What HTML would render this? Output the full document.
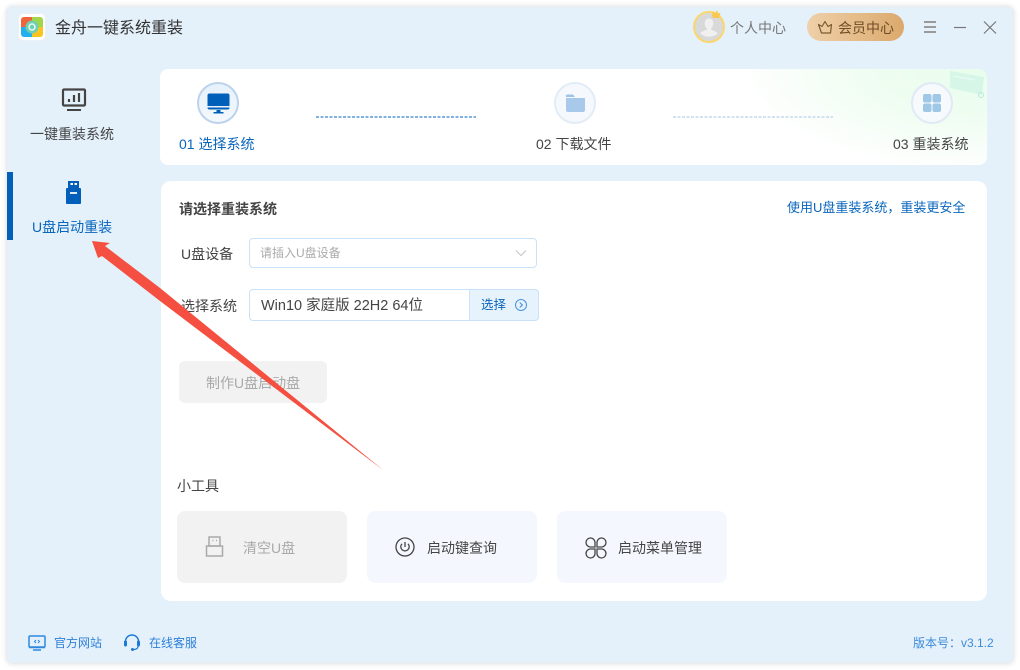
<!DOCTYPE html>
<html lang="zh-CN">
<head>
<meta charset="utf-8">
<title>金舟一键系统重装</title>
<style>
*{box-sizing:border-box;margin:0;padding:0}
html,body{width:1020px;height:670px;overflow:hidden;background:#fff}
body{font-family:"Liberation Sans","Noto Sans CJK SC",sans-serif;position:relative}
.a{position:absolute;white-space:nowrap;line-height:20px}
#win{position:absolute;left:7px;top:7px;width:1006px;height:656px;background:#e4f1fb;border-radius:4px;box-shadow:0 0 6px rgba(0,0,0,.18)}
.card{position:absolute;background:#fff}
.circle{position:absolute;width:42px;height:42px;border-radius:50%;top:82px}
svg{position:absolute;overflow:visible}
.tool{position:absolute;top:511px;width:170px;height:72px;border-radius:8px;background:#f4f8fe}
</style>
</head>
<body>
<div id="win"></div>

<!-- logo -->
<svg style="left:18px;top:13px" width="28" height="28" viewBox="0 0 28 28">
<rect x="0.5" y="0.5" width="27" height="27" rx="5" fill="#fff" stroke="#eef1f4"/>
<path d="M3 7a3 3 0 0 1 3-3h8v10H3z" fill="#f0643c"/>
<path d="M14 4h8a3 3 0 0 1 3 3v7H14z" fill="#a0d64a"/>
<path d="M3 14h11v10H6a3 3 0 0 1-3-3z" fill="#22b0ee"/>
<path d="M14 14h11v7a3 3 0 0 1-3 3h-8z" fill="#fbc41f"/>
<circle cx="14" cy="14" r="6.5" fill="#6ed0b0"/>
<circle cx="14" cy="14" r="3" fill="none" stroke="#e8f8f2" stroke-width="1.5"/>
</svg>
<div class="a" style="left:55px;top:19px;font-size:16px;color:#333">金舟一键系统重装</div>

<!-- avatar -->
<svg style="left:693px;top:8px" width="36" height="36" viewBox="0 0 36 36">
<circle cx="16" cy="19" r="15" fill="#d9d9d9" stroke="#fbd76b" stroke-width="2"/>
<path d="M16 10.500c2.800 0 4.300 2.200 4.300 4.800 0 2.200-.9 3.900-2.100 4.900v1.600c2.800 1.100 5.500 1.800 6.500 3.700a13.500 13.500 0 0 1-17.400 0c1-1.900 3.700-2.600 6.500-3.700v-1.600c-1.200-1-2.100-2.700-2.100-4.900 0-2.600 1.500-4.800 4.300-4.800z" fill="#f0f0f0"/>
<path d="M19 7l1-4 2 2.500 2-3.500 1 3.500 2.500-1-1.500 5.500h-6z" fill="#f8c94e"/>
</svg>
<div class="a" style="left:730px;top:18px;font-size:14px;color:#777">个人中心</div>

<!-- VIP -->
<div class="a" style="left:807px;top:13px;width:97px;height:28px;border-radius:14px;background:linear-gradient(90deg,#efd0aa,#dba96c)"></div>
<svg style="left:817px;top:19px" width="16" height="16" viewBox="0 0 16 16" fill="none" stroke="#7d5a2f" stroke-width="1.200" stroke-linejoin="round">
<path d="M1.500 5.500l3.500 2L8 2.500l3 5 3.500-2-1 8.500h-9z"/>
</svg>
<div class="a" style="left:838px;top:18px;font-size:14px;color:#6f4e26">会员中心</div>

<!-- window controls -->
<svg style="left:920px;top:18px" width="80" height="20" viewBox="0 0 80 20" fill="none">
<path d="M4 4h12M4 9h12M4 14h12" stroke="#9a9a9a" stroke-width="2"/>
<path d="M34 9.500h12" stroke="#777" stroke-width="1.200"/>
<path d="M64 3.500l12 12M76 3.500l-12 12" stroke="#777" stroke-width="1.200"/>
</svg>

<!-- sidebar -->
<svg style="left:62px;top:88px" width="25" height="24" viewBox="0 0 25 24" fill="none">
<rect x="1" y="1.500" width="22" height="16" rx="1" stroke="#444" stroke-width="2.200"/>
<path d="M7 14v-3M12 14V7M17 14V5" stroke="#444" stroke-width="2.200"/>
<path d="M5 22h14" stroke="#444" stroke-width="2"/>
</svg>
<div class="a" style="left:30px;top:124px;font-size:14px;color:#444">一键重装系统</div>

<div class="a" style="left:7px;top:172px;width:6px;height:68px;background:#005fb8"></div>
<svg style="left:65px;top:180px" width="17" height="25" viewBox="0 0 17 25">
<path d="M3 1h11v7H3z" fill="#005fb8"/>
<rect x="5.500" y="3" width="2.500" height="2" fill="#fff"/><rect x="9.500" y="3" width="2.500" height="2" fill="#fff"/>
<rect x="1" y="8" width="15" height="16" rx="1" fill="#005fb8"/>
<rect x="5" y="12" width="7" height="2" fill="#dfe9f5"/>
</svg>
<div class="a" style="left:32px;top:217px;font-size:14px;color:#0a66bd">U盘启动重装</div>

<!-- stepper card -->
<div class="card" style="left:160px;top:69px;width:827px;height:96px;border-radius:8px;background:radial-gradient(ellipse 250px 105px at 100% 0%,#e8fdec 0%,#f0fdf2 50%,rgba(255,255,255,0) 100%),#fff"></div>

<svg style="left:948px;top:69px" width="38" height="32" viewBox="0 0 38 32">
<path d="M2 2l34 6-2 18-32-7z" fill="#c4f0e2" opacity=".55"/>
<path d="M5 7l22 4" stroke="#e6faf3" stroke-width="1.500"/>
<circle cx="33" cy="26" r="2.500" fill="none" stroke="#b7e9dc"/>
</svg>

<div class="circle" style="left:197px;border:2px solid #bdd3ec;background:linear-gradient(#e6f1fb,#f3f8fd)"></div>
<svg style="left:207px;top:93px" width="23" height="22" viewBox="0 0 23 22">
<rect x="0.500" y="0.500" width="22" height="16" rx="2" fill="#005fb8"/>
<rect x="0.500" y="13" width="22" height="1.500" fill="#e8f1fb"/>
<path d="M9.500 17h4v2h3v1.500h-10V19h3z" fill="#005fb8"/>
</svg>
<div class="a" style="left:179px;top:134px;font-size:14px;color:#0a66bd">01 选择系统</div>

<svg style="left:316px;top:115px" width="160" height="4"><path d="M0 2h160" stroke="#82b2e0" stroke-width="2" stroke-dasharray="3 1.500"/></svg>

<div class="circle" style="left:554px;border:2px solid #e2ecf7;background:#f5f9fd"></div>
<svg style="left:565px;top:93px" width="21" height="20" viewBox="0 0 21 20">
<path d="M1 3a1.500 1.500 0 0 1 1.500-1.500h5.500l2 2.500H1z" fill="#9fc2e6"/>
<path d="M1 5h19v12a2 2 0 0 1-2 2H3a2 2 0 0 1-2-2z" fill="#a9c9ea"/>
</svg>
<div class="a" style="left:536px;top:134px;font-size:14px;color:#444">02 下载文件</div>

<svg style="left:673px;top:115px" width="160" height="4"><path d="M0 2h160" stroke="#d3e1f0" stroke-width="2" stroke-dasharray="3 1.500"/></svg>

<div class="circle" style="left:911px;border:2px solid #dfeaf5;background:#f7fafd"></div>
<svg style="left:922px;top:93px" width="20" height="20" viewBox="0 0 20 20" fill="#9fc7e6">
<rect x="1" y="1" width="8.500" height="8.500" rx="2"/><rect x="10.500" y="1" width="8.500" height="8.500" rx="2"/>
<rect x="1" y="10.500" width="8.500" height="8.500" rx="2"/><rect x="10.500" y="10.500" width="8.500" height="8.500" rx="2"/>
</svg>
<div class="a" style="left:893px;top:134px;font-size:14px;color:#444">03 重装系统</div>

<!-- main card -->
<div class="card" style="left:161px;top:181px;width:826px;height:420px;border-radius:10px"></div>
<div class="a" style="left:179px;top:199px;font-size:14px;font-weight:bold;color:#444">请选择重装系统</div>
<div class="a" style="left:787px;top:198px;font-size:13px;color:#0a66bd">使用U盘重装系统，重装更安全</div>

<div class="a" style="left:181px;top:244px;font-size:14px;color:#444">U盘设备</div>
<div class="a" style="left:249px;top:238px;width:288px;height:30px;border:1px solid #c9e2f9;border-radius:4px;background:#fff"></div>
<div class="a" style="left:260px;top:243px;font-size:12px;color:#aaa">请插入U盘设备</div>
<svg style="left:515px;top:249px" width="12" height="8" viewBox="0 0 12 8"><path d="M1 1.500l5 5 5-5" fill="none" stroke="#c4c4c4"/></svg>

<div class="a" style="left:181px;top:296px;font-size:14px;color:#444">选择系统</div>
<div class="a" style="left:249px;top:289px;width:290px;height:32px;border:1px solid #c9e2f9;border-radius:4px;background:#fff"></div>
<div class="a" style="left:469px;top:289px;width:70px;height:32px;border:1px solid #c9e2f9;border-radius:0 4px 4px 0;background:#e6f2fc"></div>
<div class="a" style="left:261px;top:296px;font-size:14.500px;color:#444">Win10 家庭版 22H2 64位</div>
<div class="a" style="left:481px;top:295px;font-size:12.500px;color:#0a66bd">选择</div>
<svg style="left:514px;top:298px" width="14" height="14" viewBox="0 0 14 14" fill="none" stroke="#4a94dc"><circle cx="7" cy="7" r="5.500"/><path d="M5.800 4.500L8.300 7l-2.500 2.500" stroke-width="1.200"/></svg>

<div class="a" style="left:179px;top:361px;width:148px;height:42px;border-radius:6px;background:#f2f2f2"></div>
<div class="a" style="left:206px;top:373px;font-size:14px;color:#aaa">制作U盘启动盘</div>

<div class="a" style="left:177px;top:476px;font-size:14px;color:#444">小工具</div>

<div class="tool" style="left:177px;background:#f2f2f2"></div>
<svg style="left:205px;top:536px" width="20" height="22" viewBox="0 0 20 22" fill="none" stroke="#aaa" stroke-width="1.500">
<path d="M4 1h11v9H4z"/><path d="M1.500 10h16v10h-16z"/>
<path d="M7.500 4.500h1M11 4.500h1"/>
</svg>
<div class="a" style="left:243px;top:538px;font-size:14px;color:#aaa">清空U盘</div>

<div class="tool" style="left:367px"></div>
<svg style="left:394px;top:536px" width="22" height="22" viewBox="0 0 22 22" fill="none" stroke="#444">
<circle cx="11" cy="11" r="9" stroke-width="1.300"/>
<path d="M8 7.800a4.200 4.200 0 1 0 6 0" stroke-width="1.300"/>
<path d="M11 6v5" stroke-width="1.300"/>
</svg>
<div class="a" style="left:427px;top:538px;font-size:14px;color:#444">启动键查询</div>

<div class="tool" style="left:557px"></div>
<svg style="left:584px;top:536px" width="24" height="24" viewBox="0 0 24 24" fill="none" stroke="#444" stroke-width="1.300">
<path d="M11 11H6a4.500 4.500 0 1 1 5-5z"/>
<path d="M13 11h5a4.500 4.500 0 1 0-5-5z"/>
<path d="M11 13H6a4.500 4.500 0 1 0 5 5z"/>
<path d="M13 13h5a4.500 4.500 0 1 1-5 5z"/>
</svg>
<div class="a" style="left:618px;top:538px;font-size:14px;color:#444">启动菜单管理</div>

<!-- footer -->
<svg style="left:28px;top:635px" width="19" height="16" viewBox="0 0 19 16" fill="none" stroke="#2e88e0">
<rect x="1" y="1" width="16" height="11" rx="1" stroke-width="1.500"/>
<path d="M1 12.500h16" stroke-width="1.500"/>
<path d="M5 15h8" stroke-width="1.500"/>
<path d="M8 5L6.500 6.500 8 8M10 5l1.500 1.500L10 8"/>
</svg>
<div class="a" style="left:54px;top:633px;font-size:12px;color:#2e80d8">官方网站</div>
<svg style="left:123px;top:634px" width="18" height="18" viewBox="0 0 18 18" fill="none">
<path d="M2.500 9V7.500a6.500 6.500 0 0 1 13 0V9" stroke="#1a7ad8" stroke-width="1.500"/>
<rect x="1" y="6.500" width="3" height="6" rx="1.500" fill="#1a7ad8"/>
<rect x="14" y="6.500" width="3" height="6" rx="1.500" fill="#1a7ad8"/>
<path d="M15 12c0 2.500-2 3.500-4.500 3.500" stroke="#1a7ad8" stroke-width="1.200"/>
<circle cx="9.500" cy="15.500" r="1.500" fill="#1a7ad8"/>
</svg>
<div class="a" style="left:149px;top:633px;font-size:12px;color:#2e80d8">在线客服</div>
<div class="a" style="left:913px;top:633px;font-size:12px;color:#3d8ad9">版本号：v3.1.2</div>

<!-- red arrow -->
<svg style="left:0;top:0" width="1020" height="670" viewBox="0 0 1020 670">
<path d="M92 241L110 243L105 246L160 288L383 470L160 301L102 256L98 258Z" fill="#f44f41"/>
</svg>
</body>
</html>
